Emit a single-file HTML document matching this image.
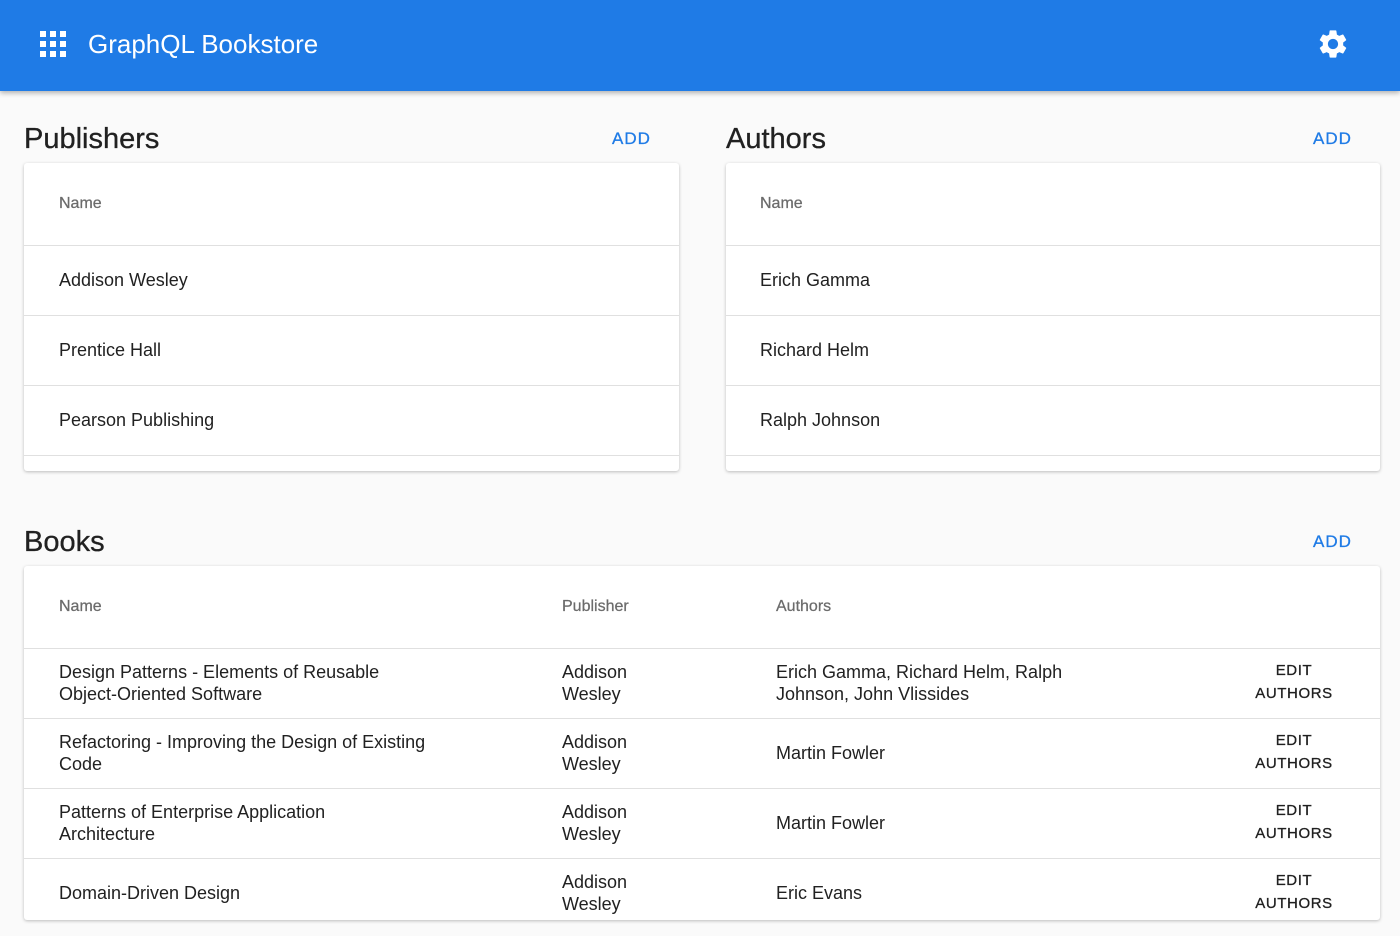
<!DOCTYPE html>
<html><head><style>
*{margin:0;padding:0;box-sizing:border-box}
body{width:1400px;height:936px;background:#fafafa;font-family:"Liberation Sans",sans-serif;position:relative;overflow:hidden;color:#212121}
.bar{position:absolute;left:0;top:0;width:1400px;height:91px;background:#1f7be6;box-shadow:0 2px 5px rgba(0,0,0,.3)}
.bar .t{position:absolute;left:88px;top:29px;font-size:26px;color:#fff}
.a{position:absolute}
h2{position:absolute;font-size:29px;font-weight:normal;color:#212121;-webkit-text-stroke:.3px #212121}
.add{position:absolute;font-size:17px;color:#1f7be6;letter-spacing:1px;-webkit-text-stroke:.3px #1f7be6}
.card{position:absolute;background:#fff;box-shadow:0 1px 3px rgba(0,0,0,.25);border-radius:3px}
.hd{position:absolute;font-size:16px;color:#6b6b6b;-webkit-text-stroke:.25px #6b6b6b}
.row{position:absolute;left:0;right:0;border-top:1px solid #e0e0e0}
.tx{position:absolute;font-size:18px;color:#212121;line-height:22px}
.ed{position:absolute;font-size:15px;color:#212121;letter-spacing:.6px;text-align:center;line-height:23px;width:120px;-webkit-text-stroke:.3px #212121}
</style></head><body>
<div class="bar">
<svg class="a" style="left:40px;top:31px" width="26" height="26" viewBox="0 0 26 26" fill="#fff">
<rect x="0" y="0" width="6" height="6"/><rect x="10" y="0" width="6" height="6"/><rect x="20" y="0" width="6" height="6"/>
<rect x="0" y="10" width="6" height="6"/><rect x="10" y="10" width="6" height="6"/><rect x="20" y="10" width="6" height="6"/>
<rect x="0" y="20" width="6" height="6"/><rect x="10" y="20" width="6" height="6"/><rect x="20" y="20" width="6" height="6"/></svg>
<div class="t">GraphQL Bookstore</div>
<svg class="a" style="left:1316px;top:27px" width="34" height="34" viewBox="0 0 24 24" fill="#fff"><path d="M19.14 12.94c.04-.3.06-.61.06-.94 0-.32-.02-.64-.07-.94l2.03-1.58a.49.49 0 0 0 .12-.61l-1.92-3.32a.488.488 0 0 0-.59-.22l-2.39.96c-.5-.38-1.03-.7-1.62-.94l-.36-2.54a.484.484 0 0 0-.48-.41h-3.840c-.24 0-.43.17-.47.41l-.36 2.54c-.59.24-1.130.57-1.62.94l-2.39-.96c-.22-.08-.47 0-.59.22L2.74 8.87c-.12.21-.08.47.12.61l2.03 1.58c-.05.3-.09.63-.09.94s.02.64.07.94l-2.03 1.58a.49.49 0 0 0-.12.61l1.92 3.32c.12.22.37.29.59.22l2.39-.96c.5.38 1.03.7 1.62.94l.36 2.54c.05.24.24.41.48.41h3.84c.24 0 .44-.17.47-.41l.36-2.54c.59-.24 1.13-.56 1.62-.94l2.39.96c.22.08.47 0 .59-.22l1.92-3.32c.12-.22.07-.47-.12-.61l-2.01-1.58zM12 15.6c-1.98 0-3.6-1.62-3.6-3.6s1.62-3.6 3.6-3.6 3.6 1.62 3.6 3.6-1.62 3.6-3.6 3.6z"/></svg>
</div>

<h2 style="left:24px;top:123px">Publishers</h2>
<div class="add" style="left:612px;top:129px">ADD</div>
<div class="card" style="left:24px;top:163px;width:655px;height:308px">
<div class="hd" style="left:35px;top:32px">Name</div>
<div class="row" style="top:82px;height:70px"><div class="tx" style="left:35px;top:23px">Addison Wesley</div></div>
<div class="row" style="top:152px;height:70px"><div class="tx" style="left:35px;top:23px">Prentice Hall</div></div>
<div class="row" style="top:222px;height:70px"><div class="tx" style="left:35px;top:23px">Pearson Publishing</div></div>
<div class="row" style="top:292px"></div>
</div>

<h2 style="left:726px;top:123px">Authors</h2>
<div class="add" style="left:1313px;top:129px">ADD</div>
<div class="card" style="left:726px;top:163px;width:654px;height:308px">
<div class="hd" style="left:34px;top:32px">Name</div>
<div class="row" style="top:82px;height:70px"><div class="tx" style="left:34px;top:23px">Erich Gamma</div></div>
<div class="row" style="top:152px;height:70px"><div class="tx" style="left:34px;top:23px">Richard Helm</div></div>
<div class="row" style="top:222px;height:70px"><div class="tx" style="left:34px;top:23px">Ralph Johnson</div></div>
<div class="row" style="top:292px"></div>
</div>

<h2 style="left:24px;top:526px">Books</h2>
<div class="add" style="left:1313px;top:532px">ADD</div>
<div class="card" style="left:24px;top:566px;width:1356px;height:354px">
<div class="hd" style="left:35px;top:32px">Name</div>
<div class="hd" style="left:538px;top:32px">Publisher</div>
<div class="hd" style="left:752px;top:32px">Authors</div>
<div class="row" style="top:82px;height:70px">
<div class="tx" style="left:35px;top:12px">Design Patterns - Elements of Reusable<br>Object-Oriented Software</div>
<div class="tx" style="left:538px;top:12px">Addison<br>Wesley</div>
<div class="tx" style="left:752px;top:12px">Erich Gamma, Richard Helm, Ralph<br>Johnson, John Vlissides</div>
<div class="ed" style="left:1210px;top:10px">EDIT<br>AUTHORS</div></div>
<div class="row" style="top:152px;height:70px">
<div class="tx" style="left:35px;top:12px">Refactoring - Improving the Design of Existing<br>Code</div>
<div class="tx" style="left:538px;top:12px">Addison<br>Wesley</div>
<div class="tx" style="left:752px;top:23px">Martin Fowler</div>
<div class="ed" style="left:1210px;top:10px">EDIT<br>AUTHORS</div></div>
<div class="row" style="top:222px;height:70px">
<div class="tx" style="left:35px;top:12px">Patterns of Enterprise Application<br>Architecture</div>
<div class="tx" style="left:538px;top:12px">Addison<br>Wesley</div>
<div class="tx" style="left:752px;top:23px">Martin Fowler</div>
<div class="ed" style="left:1210px;top:10px">EDIT<br>AUTHORS</div></div>
<div class="row" style="top:292px;height:62px">
<div class="tx" style="left:35px;top:23px">Domain-Driven Design</div>
<div class="tx" style="left:538px;top:12px">Addison<br>Wesley</div>
<div class="tx" style="left:752px;top:23px">Eric Evans</div>
<div class="ed" style="left:1210px;top:10px">EDIT<br>AUTHORS</div></div>
</div>
</body></html>
